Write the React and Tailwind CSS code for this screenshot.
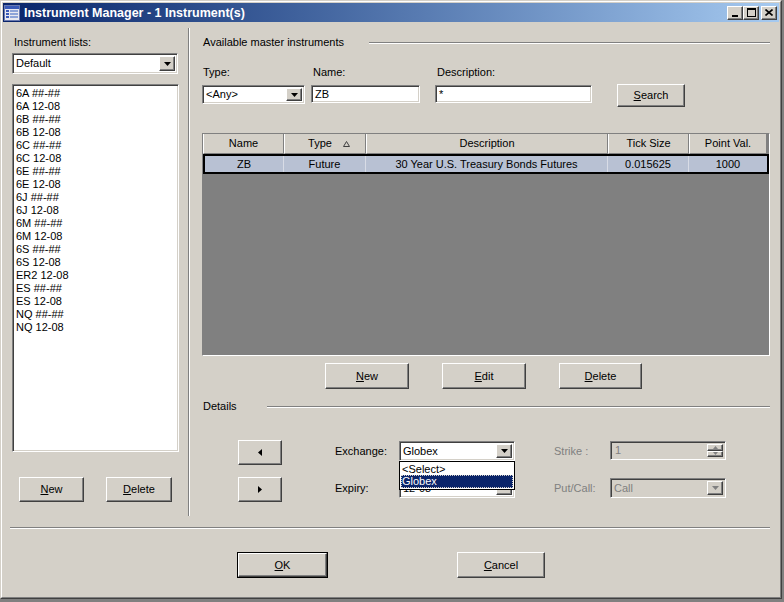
import React from "react";

const raised =
  "bg-[#d4d0c8] border border-t-white border-l-white border-r-[#404040] border-b-[#404040] shadow-[inset_-1px_-1px_0_#808080]";
const sunken =
  "border border-t-[#808080] border-l-[#808080] border-r-white border-b-white shadow-[inset_1px_1px_0_#404040,inset_-1px_-1px_0_#d4d0c8]";

function Btn({ children, className = "" }) {
  return (
    <div className={`${raised} flex items-center justify-center ${className}`}>
      {children}
    </div>
  );
}

function DownArrow({ color = "#000" }) {
  return (
    <svg width="7" height="4" viewBox="0 0 7 4">
      <path d="M0 0h7L3.5 4z" fill={color} />
    </svg>
  );
}

function Combo({ value, className = "", disabled }) {
  return (
    <div
      className={`${sunken} ${
        disabled ? "bg-[#d4d0c8] text-[#808080]" : "bg-white"
      } flex items-stretch p-[2px] ${className}`}
    >
      <span className="flex-1 pl-[1px] leading-[13px] self-center whitespace-nowrap overflow-hidden">
        {value}
      </span>
      <div className={`${raised} w-[16px] flex items-center justify-center`}>
        <DownArrow color={disabled ? "#808080" : "#000"} />
      </div>
    </div>
  );
}

function TextBox({ value, className = "" }) {
  return (
    <div className={`${sunken} bg-white flex items-center pl-[3px] ${className}`}>
      <span className="leading-[13px]">{value}</span>
    </div>
  );
}

const items = [
  "6A ##-##",
  "6A 12-08",
  "6B ##-##",
  "6B 12-08",
  "6C ##-##",
  "6C 12-08",
  "6E ##-##",
  "6E 12-08",
  "6J ##-##",
  "6J 12-08",
  "6M ##-##",
  "6M 12-08",
  "6S ##-##",
  "6S 12-08",
  "ER2 12-08",
  "ES ##-##",
  "ES 12-08",
  "NQ ##-##",
  "NQ 12-08",
];

function HeaderCell({ children, w }) {
  return (
    <div
      className={`${w} h-full bg-[#d4d0c8] border-l border-l-white border-r border-r-[#808080] border-b border-b-[#808080] flex items-center justify-center`}
    >
      {children}
    </div>
  );
}

function RowCell({ children, w }) {
  return (
    <div className={`${w} h-full border-r border-r-[#d8dce6] flex items-center justify-center`}>
      {children}
    </div>
  );
}

export default function App() {
  return (
    <div className="w-[784px] h-[602px] bg-[#808080] font-['Liberation_Sans',Arial,sans-serif] text-[11px] text-black overflow-hidden">
      <div className="w-[782px] h-[599px] bg-[#d4d0c8] border border-t-[#d4d0c8] border-l-[#d4d0c8] border-r-[#404040] border-b-[#404040]">
        <div className="h-full border border-t-white border-l-white border-r-[#808080] border-b-[#808080] p-[1px] flex flex-col">
          {/* Title bar */}
          <div className="h-[19px] shrink-0 flex items-center bg-linear-to-r from-[#0a246a] to-[#a6caf0] pl-[1px] pr-[2px]">
            <svg width="16" height="16" viewBox="0 0 16 16">
              <rect x="0.5" y="0.5" width="15" height="15" fill="#e8e8f0" stroke="#6a7ab0" />
              <rect x="1" y="1" width="14" height="3" fill="#3a5ab8" />
              <rect x="2" y="5" width="3" height="2" fill="#3a5ab8" />
              <rect x="6" y="5" width="8" height="2" fill="#8ea4d8" />
              <rect x="2" y="8" width="3" height="2" fill="#3a5ab8" />
              <rect x="6" y="8" width="8" height="2" fill="#8ea4d8" />
              <rect x="2" y="11" width="3" height="2" fill="#3a5ab8" />
              <rect x="6" y="11" width="8" height="2" fill="#8ea4d8" />
            </svg>
            <span className="ml-[4px] mt-[1px] text-white font-bold text-[12.5px] leading-[15px] whitespace-nowrap">
              Instrument Manager - 1 Instrument(s)
            </span>
            <div className="flex-1" />
            <Btn className="w-[16px] h-[14px] items-end pb-[2px]">
              <div className="w-[6px] h-[2px] bg-black" />
            </Btn>
            <Btn className="w-[16px] h-[14px]">
              <div className="w-[9px] h-[9px] border border-black border-t-2" />
            </Btn>
            <Btn className="w-[16px] h-[14px] ml-[2px]">
              <svg width="8" height="7" viewBox="0 0 8 7">
                <path d="M0.5 0.5L7.5 6.5M7.5 0.5L0.5 6.5" stroke="#000" strokeWidth="1.6" />
              </svg>
            </Btn>
          </div>

          {/* Body */}
          <div className="h-[500px] shrink-0 flex">
            {/* Left panel */}
            <div className="w-[185px] shrink-0 pl-[9px] pt-[14px] flex flex-col">
              <div className="leading-[13px] pl-[2px]">Instrument lists:</div>
              <Combo value="Default" className="mt-[4px] w-[166px] h-[21px]" />
              <div className={`${sunken} bg-white mt-[10px] w-[167px] h-[368px] pt-[2px] pl-[3px]`}>
                {items.map((it) => (
                  <div key={it} className="leading-[13px] whitespace-nowrap">
                    {it}
                  </div>
                ))}
              </div>
              <div className="flex mt-[25px] pl-[7px]">
                <Btn className="w-[65px] h-[25px]">
                  <span>
                    <u>N</u>ew
                  </span>
                </Btn>
                <Btn className="w-[66px] h-[25px] ml-[22px]">
                  <span>
                    <u>D</u>elete
                  </span>
                </Btn>
              </div>
            </div>

            {/* Vertical separator */}
            <div className="w-[2px] shrink-0 mt-[6px] h-[488px] border-l border-l-[#808080] border-r border-r-white" />

            {/* Right panel */}
            <div className="flex-1 pl-[12px] pr-[9px] pt-[14px] flex flex-col">
              <div className="flex items-center h-[13px]">
                <span className="pl-[1px] leading-[13px] whitespace-nowrap">Available master instruments</span>
                <div className="flex-1 ml-[25px] h-[2px] border-t border-t-[#808080] border-b border-b-white" />
              </div>

              {/* Search fields */}
              <div className="flex mt-[17px]">
                <div className="flex flex-col w-[103px]">
                  <span className="leading-[13px] pl-[1px]">Type:</span>
                  <Combo value="<Any>" className="mt-[6px] h-[19px] w-[103px]" />
                </div>
                <div className="flex flex-col ml-[6px] w-[109px]">
                  <span className="leading-[13px] pl-[2px]">Name:</span>
                  <TextBox value="ZB" className="mt-[6px] h-[18px] w-[109px]" />
                </div>
                <div className="flex flex-col ml-[15px] w-[157px]">
                  <span className="leading-[13px] pl-[2px]">Description:</span>
                  <TextBox value="*" className="mt-[6px] h-[18px] w-[157px]" />
                </div>
                <div className="ml-[25px] pt-[18px]">
                  <Btn className="w-[68px] h-[23px]">
                    <span>
                      <u>S</u>earch
                    </span>
                  </Btn>
                </div>
              </div>

              {/* Grid */}
              <div className="mt-[26px] w-[568px] h-[223px] bg-[#808080] border border-t-[#808080] border-l-[#808080] border-r-white border-b-white">
                <div className="h-[20px] flex">
                  <HeaderCell w="w-[81px]">Name</HeaderCell>
                  <HeaderCell w="w-[82px]">
                    <span className="ml-[8px]">Type</span>
                    <svg className="ml-[11px]" width="7" height="6" viewBox="0 0 7 6">
                      <path d="M3.5 0.5L6.5 5.5H0.5z" fill="none" stroke="#404040" />
                    </svg>
                  </HeaderCell>
                  <HeaderCell w="w-[242px]">Description</HeaderCell>
                  <HeaderCell w="w-[81px]">Tick Size</HeaderCell>
                  <HeaderCell w="w-[78px]">Point Val.</HeaderCell>
                </div>
                <div className="h-[20px] flex border-2 border-black bg-[#b8c1d3]">
                  <RowCell w="w-[79px]">ZB</RowCell>
                  <RowCell w="w-[82px]">Future</RowCell>
                  <RowCell w="w-[242px]">30 Year U.S. Treasury Bonds Futures</RowCell>
                  <RowCell w="w-[81px]">0.015625</RowCell>
                  <div className="flex-1 h-full flex items-center justify-center">1000</div>
                </div>
              </div>

              {/* Grid buttons */}
              <div className="flex mt-[7px] pl-[123px]">
                <Btn className="w-[84px] h-[26px]">
                  <span>
                    <u>N</u>ew
                  </span>
                </Btn>
                <Btn className="w-[84px] h-[26px] ml-[33px]">
                  <span>
                    <u>E</u>dit
                  </span>
                </Btn>
                <Btn className="w-[83px] h-[26px] ml-[33px]">
                  <span>
                    <u>D</u>elete
                  </span>
                </Btn>
              </div>

              {/* Details */}
              <div className="flex items-center h-[13px] mt-[11px]">
                <span className="pl-[1px] leading-[13px]">Details</span>
                <div className="flex-1 ml-[30px] h-[2px] border-t border-t-[#808080] border-b border-b-white" />
              </div>

              <div className="flex mt-[27px] pl-[36px] relative z-10">
                <Btn className="w-[44px] h-[25px]">
                  <svg width="4" height="7" viewBox="0 0 4 7">
                    <path d="M4 0v7L0 3.5z" fill="#000" />
                  </svg>
                </Btn>
                <div className="ml-[53px] w-[64px] h-[20px] mt-[1px] flex items-center">Exchange:</div>
                <div className="relative mt-[1px]">
                  <Combo value="Globex" className="w-[116px] h-[20px]" />
                  <div className="absolute left-0 top-[20px] w-[116px] h-[29px] bg-white border border-black p-[1px]">
                    <div className="leading-[12px] h-[12px] pl-[1px]">&lt;Select&gt;</div>
                    <div className="leading-[12px] h-[13px] pl-[1px] bg-[#0a246a] text-white outline-1 outline-dotted outline-offset-[-1px] outline-[#d4d0c8]">
                      Globex
                    </div>
                  </div>
                </div>
                <div className="ml-[39px] w-[56px] h-[20px] mt-[1px] flex items-center text-[#808080]">Strike :</div>
                <div className={`${sunken} bg-[#d4d0c8] mt-[1px] w-[116px] h-[19px] flex items-stretch p-[2px]`}>
                  <span className="flex-1 pl-[2px] self-center leading-[13px] text-[#808080]">1</span>
                  <div className="w-[16px] flex flex-col">
                    <div className={`${raised} flex-1 flex items-center justify-center`}>
                      <svg width="5" height="3" viewBox="0 0 5 3">
                        <path d="M0 3h5L2.5 0z" fill="#808080" />
                      </svg>
                    </div>
                    <div className={`${raised} flex-1 flex items-center justify-center`}>
                      <svg width="5" height="3" viewBox="0 0 5 3">
                        <path d="M0 0h5L2.5 3z" fill="#808080" />
                      </svg>
                    </div>
                  </div>
                </div>
              </div>

              <div className="flex mt-[12px] pl-[36px]">
                <Btn className="w-[44px] h-[25px]">
                  <svg width="4" height="7" viewBox="0 0 4 7">
                    <path d="M0 0v7L4 3.5z" fill="#000" />
                  </svg>
                </Btn>
                <div className="ml-[53px] w-[64px] h-[20px] mt-[1px] flex items-center">Expiry:</div>
                <Combo value="12-08" className="mt-[1px] w-[116px] h-[20px]" />
                <div className="ml-[39px] w-[56px] h-[20px] mt-[1px] flex items-center text-[#808080]">Put/Call:</div>
                <Combo value="Call" disabled className="mt-[1px] w-[116px] h-[20px]" />
              </div>
            </div>
          </div>

          {/* Bottom separator */}
          <div className="mt-[5px] ml-[7px] w-[760px] h-[2px] border-t border-t-[#808080] border-b border-b-white" />

          {/* OK / Cancel */}
          <div className="flex mt-[23px] pl-[234px]">
            <div className="w-[91px] h-[26px] border border-black flex">
              <Btn className="flex-1">
                <span>
                  <u>O</u>K
                </span>
              </Btn>
            </div>
            <Btn className="w-[88px] h-[26px] ml-[129px]">
              <span>
                <u>C</u>ancel
              </span>
            </Btn>
          </div>
        </div>
      </div>
    </div>
  );
}
